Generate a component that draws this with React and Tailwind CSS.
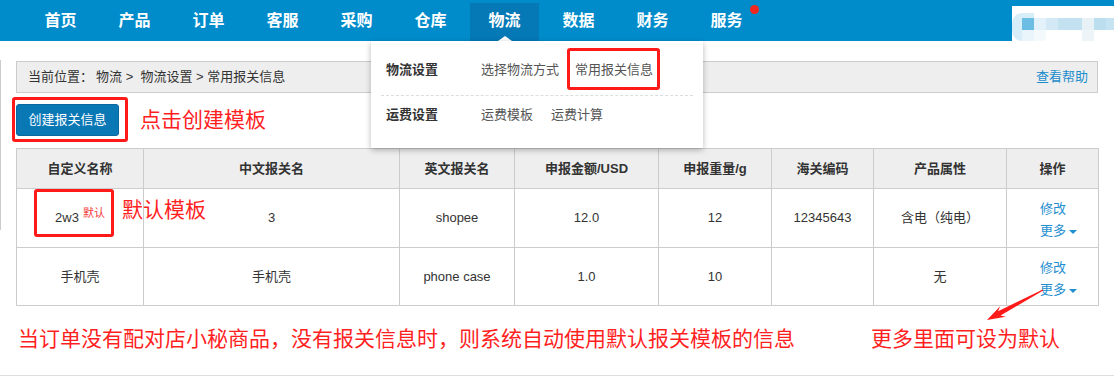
import React from "react";

const navItems = ["首页", "产品", "订单", "客服", "采购", "仓库", "物流", "数据", "财务", "服务"];

function Caret() {
  return (
    <span className="ml-[3px] inline-block h-0 w-0 translate-y-[1px] border-x-[4px] border-t-[4px] border-x-transparent border-t-[#1e8ed0] align-middle" />
  );
}

function Ops() {
  return (
    <div className="pt-[4px] text-left leading-[22px] text-[#1e8ed0]">
      <div>修改</div>
      <div className="flex items-center">
        <span>更多</span>
        <Caret />
      </div>
    </div>
  );
}

export default function App() {
  const cols = ["w-[127px]", "w-[256px]", "w-[115px]", "w-[144px]", "w-[113px]", "w-[102px]", "w-[133px]", "w-[92px]"];
  const headers = ["自定义名称", "中文报关名", "英文报关名", "申报金额/USD", "申报重量/g", "海关编码", "产品属性", "操作"];

  return (
    <div className="relative h-[379px] w-[1114px] overflow-hidden bg-white font-['Liberation_Sans','Noto_Sans_CJK_SC',sans-serif] text-[#333]">
      {/* Top navigation */}
      <div className="flex h-[41px] bg-[#008ccb] pl-[26px]">
        <div className="flex gap-[5px]">
          {navItems.map((t) => (
            <div
              key={t}
              className={
                t === "物流"
                  ? "relative flex h-[38px] w-[69px] items-center justify-center self-end bg-[#0479b6] pb-[2px] text-[16px] font-bold leading-[20px] text-white"
                  : "relative flex h-[38px] w-[69px] items-center justify-center self-end pb-[2px] text-[16px] font-bold leading-[20px] text-white"
              }
            >
              {t}
              {t === "物流" && (
                <span className="absolute bottom-0 left-1/2 h-0 w-0 -translate-x-1/2 border-x-[7px] border-b-[5px] border-x-transparent border-b-white" />
              )}
              {t === "服务" && (
                <span className="absolute right-[2px] top-[2px] h-[9px] w-[9px] rounded-full bg-[#f0261f]" />
              )}
            </div>
          ))}
        </div>
        <div className="ml-auto h-[35px] w-[102px] self-end bg-white">
          <svg width="102" height="35" viewBox="0 0 102 35">
            <rect x="0" y="7" width="22" height="28" rx="10" fill="#d7edf7" />
            <rect x="10" y="7" width="12" height="28" fill="#d7edf7" />
            <rect x="10" y="12" width="12" height="12" fill="#6cbde3" />
            <rect x="22" y="12" width="12" height="12" fill="#e3f2fa" />
            <rect x="34" y="12" width="12" height="12" fill="#d3e9f5" />
            <rect x="46" y="12" width="12" height="12" fill="#c3e1f0" />
            <rect x="58" y="12" width="12" height="12" fill="#c3e1f0" />
            <rect x="70" y="12" width="12" height="12" fill="#e8f1f6" />
            <rect x="82" y="12" width="12" height="12" fill="#bcdff0" />
            <rect x="94" y="12" width="8" height="12" fill="#c6e3f1" />
            <rect x="10" y="24" width="12" height="11" fill="#eaf5fb" />
            <rect x="22" y="24" width="12" height="11" fill="#f4f9fc" />
            <rect x="70" y="24" width="12" height="11" fill="#eef5f9" />
          </svg>
        </div>
      </div>

      {/* Main */}
      <div className="flex">
        <div className="mt-[19px] h-[170px] w-px bg-[#cccccc]" />
        <div className="ml-[15px] w-[1082px] pt-[20px]">
          <div className="flex h-[32px] items-center justify-between border border-[#cccccc] bg-[#eeeeee] pl-[11px] pr-[9px] text-[13px] leading-[18px]">
            <div className="text-[#333]">
              <span>当前位置：</span>
              <span className="ml-[3px]">物流 &gt;&nbsp; 物流设置 &gt; 常用报关信息</span>
            </div>
            <span className="text-[#1a8ccc]">查看帮助</span>
          </div>

          <div className="-ml-[4px] mt-[4px] flex items-center">
            <div className="h-[45px] w-[116px] rounded-[3px] border-[3px] border-[#ff1a1a] pl-[1px] pt-[4px]">
              <div className="flex h-[32px] w-[103px] items-center justify-center rounded-[3px] border border-[#0a689f] bg-[#0b78b6] text-[13px] text-white">
                创建报关信息
              </div>
            </div>
            <span className="ml-[12px] text-[21px] leading-[28px] text-[#ff1f1f]">点击创建模板</span>
          </div>

          <table className="mt-[6px] w-[1082px] table-fixed border-collapse text-[13px] leading-[18px] text-[#333]">
            <colgroup>
              {cols.map((c, i) => (
                <col key={i} className={c} />
              ))}
            </colgroup>
            <thead>
              <tr className="h-[40px] bg-[#eeeeee]">
                {headers.map((h) => (
                  <th key={h} className="border border-[#cccccc] text-center font-bold">
                    {h}
                  </th>
                ))}
              </tr>
            </thead>
            <tbody>
              <tr className="h-[59px]">
                <td className="border border-[#cccccc] text-center">
                  <span>2w3</span>
                  <span className="relative -top-[5px] ml-[4px] text-[11px] text-[#f23a3a]">默认</span>
                </td>
                <td className="border border-[#cccccc] text-center">3</td>
                <td className="border border-[#cccccc] text-center">shopee</td>
                <td className="border border-[#cccccc] text-center">12.0</td>
                <td className="border border-[#cccccc] text-center">12</td>
                <td className="border border-[#cccccc] text-center">12345643</td>
                <td className="border border-[#cccccc] text-center">含电（纯电）</td>
                <td className="border border-[#cccccc] pl-[33px]">
                  <Ops />
                </td>
              </tr>
              <tr className="h-[58px]">
                <td className="border border-[#cccccc] text-center">手机壳</td>
                <td className="border border-[#cccccc] text-center">手机壳</td>
                <td className="border border-[#cccccc] text-center">phone case</td>
                <td className="border border-[#cccccc] text-center">1.0</td>
                <td className="border border-[#cccccc] text-center">10</td>
                <td className="border border-[#cccccc] text-center"></td>
                <td className="border border-[#cccccc] text-center">无</td>
                <td className="border border-[#cccccc] pl-[33px]">
                  <Ops />
                </td>
              </tr>
            </tbody>
          </table>
        </div>
      </div>

      <div className="mt-[19px] flex pl-[18px] text-[21px] leading-[28px] text-[#ff1f1f]">
        <span className="w-[853px]">当订单没有配对店小秘商品，没有报关信息时，则系统自动使用默认报关模板的信息</span>
        <span>更多里面可设为默认</span>
      </div>
      <div className="mt-[22px] h-px bg-[#dddddd]" />

      {/* Dropdown menu */}
      <div className="absolute left-[371px] top-[41px] h-[107px] w-[332px] bg-white text-[13px] leading-[18px] shadow-[0_2px_6px_rgba(0,0,0,0.28)]">
        <div className="mx-[10px] flex h-[55px] items-center border-b border-dashed border-[#dddddd] pl-[5px] pt-[3px]">
          <span className="w-[95px] font-bold text-[#333]">物流设置</span>
          <span className="text-[#555]">选择物流方式</span>
          <span className="ml-[16px] text-[#555]">常用报关信息</span>
        </div>
        <div className="mx-[10px] flex h-[38px] items-center pl-[5px]">
          <span className="w-[95px] font-bold text-[#333]">运费设置</span>
          <span className="text-[#555]">运费模板</span>
          <span className="ml-[18px] text-[#555]">运费计算</span>
        </div>
        <div className="absolute left-[196px] top-[7px] h-[42px] w-[93px] rounded-[3px] border-[3px] border-[#ff1a1a]" />
      </div>

      {/* Annotations */}
      <div className="absolute left-[34px] top-[189px] h-[48px] w-[80px] rounded-[3px] border-[3px] border-[#ff1a1a]" />
      <span className="absolute left-[122px] top-[196px] text-[21px] leading-[28px] text-[#ff1f1f]">默认模板</span>
      <svg className="absolute left-[980px] top-[284px]" width="70" height="42" viewBox="0 0 70 42">
        <polygon
          points="7,36 25.7,32.8 20.5,31.6 63.2,6.4 62.8,5.6 18.1,27.2 20.1,22.2"
          fill="#ff1a1a"
        />
      </svg>
    </div>
  );
}
